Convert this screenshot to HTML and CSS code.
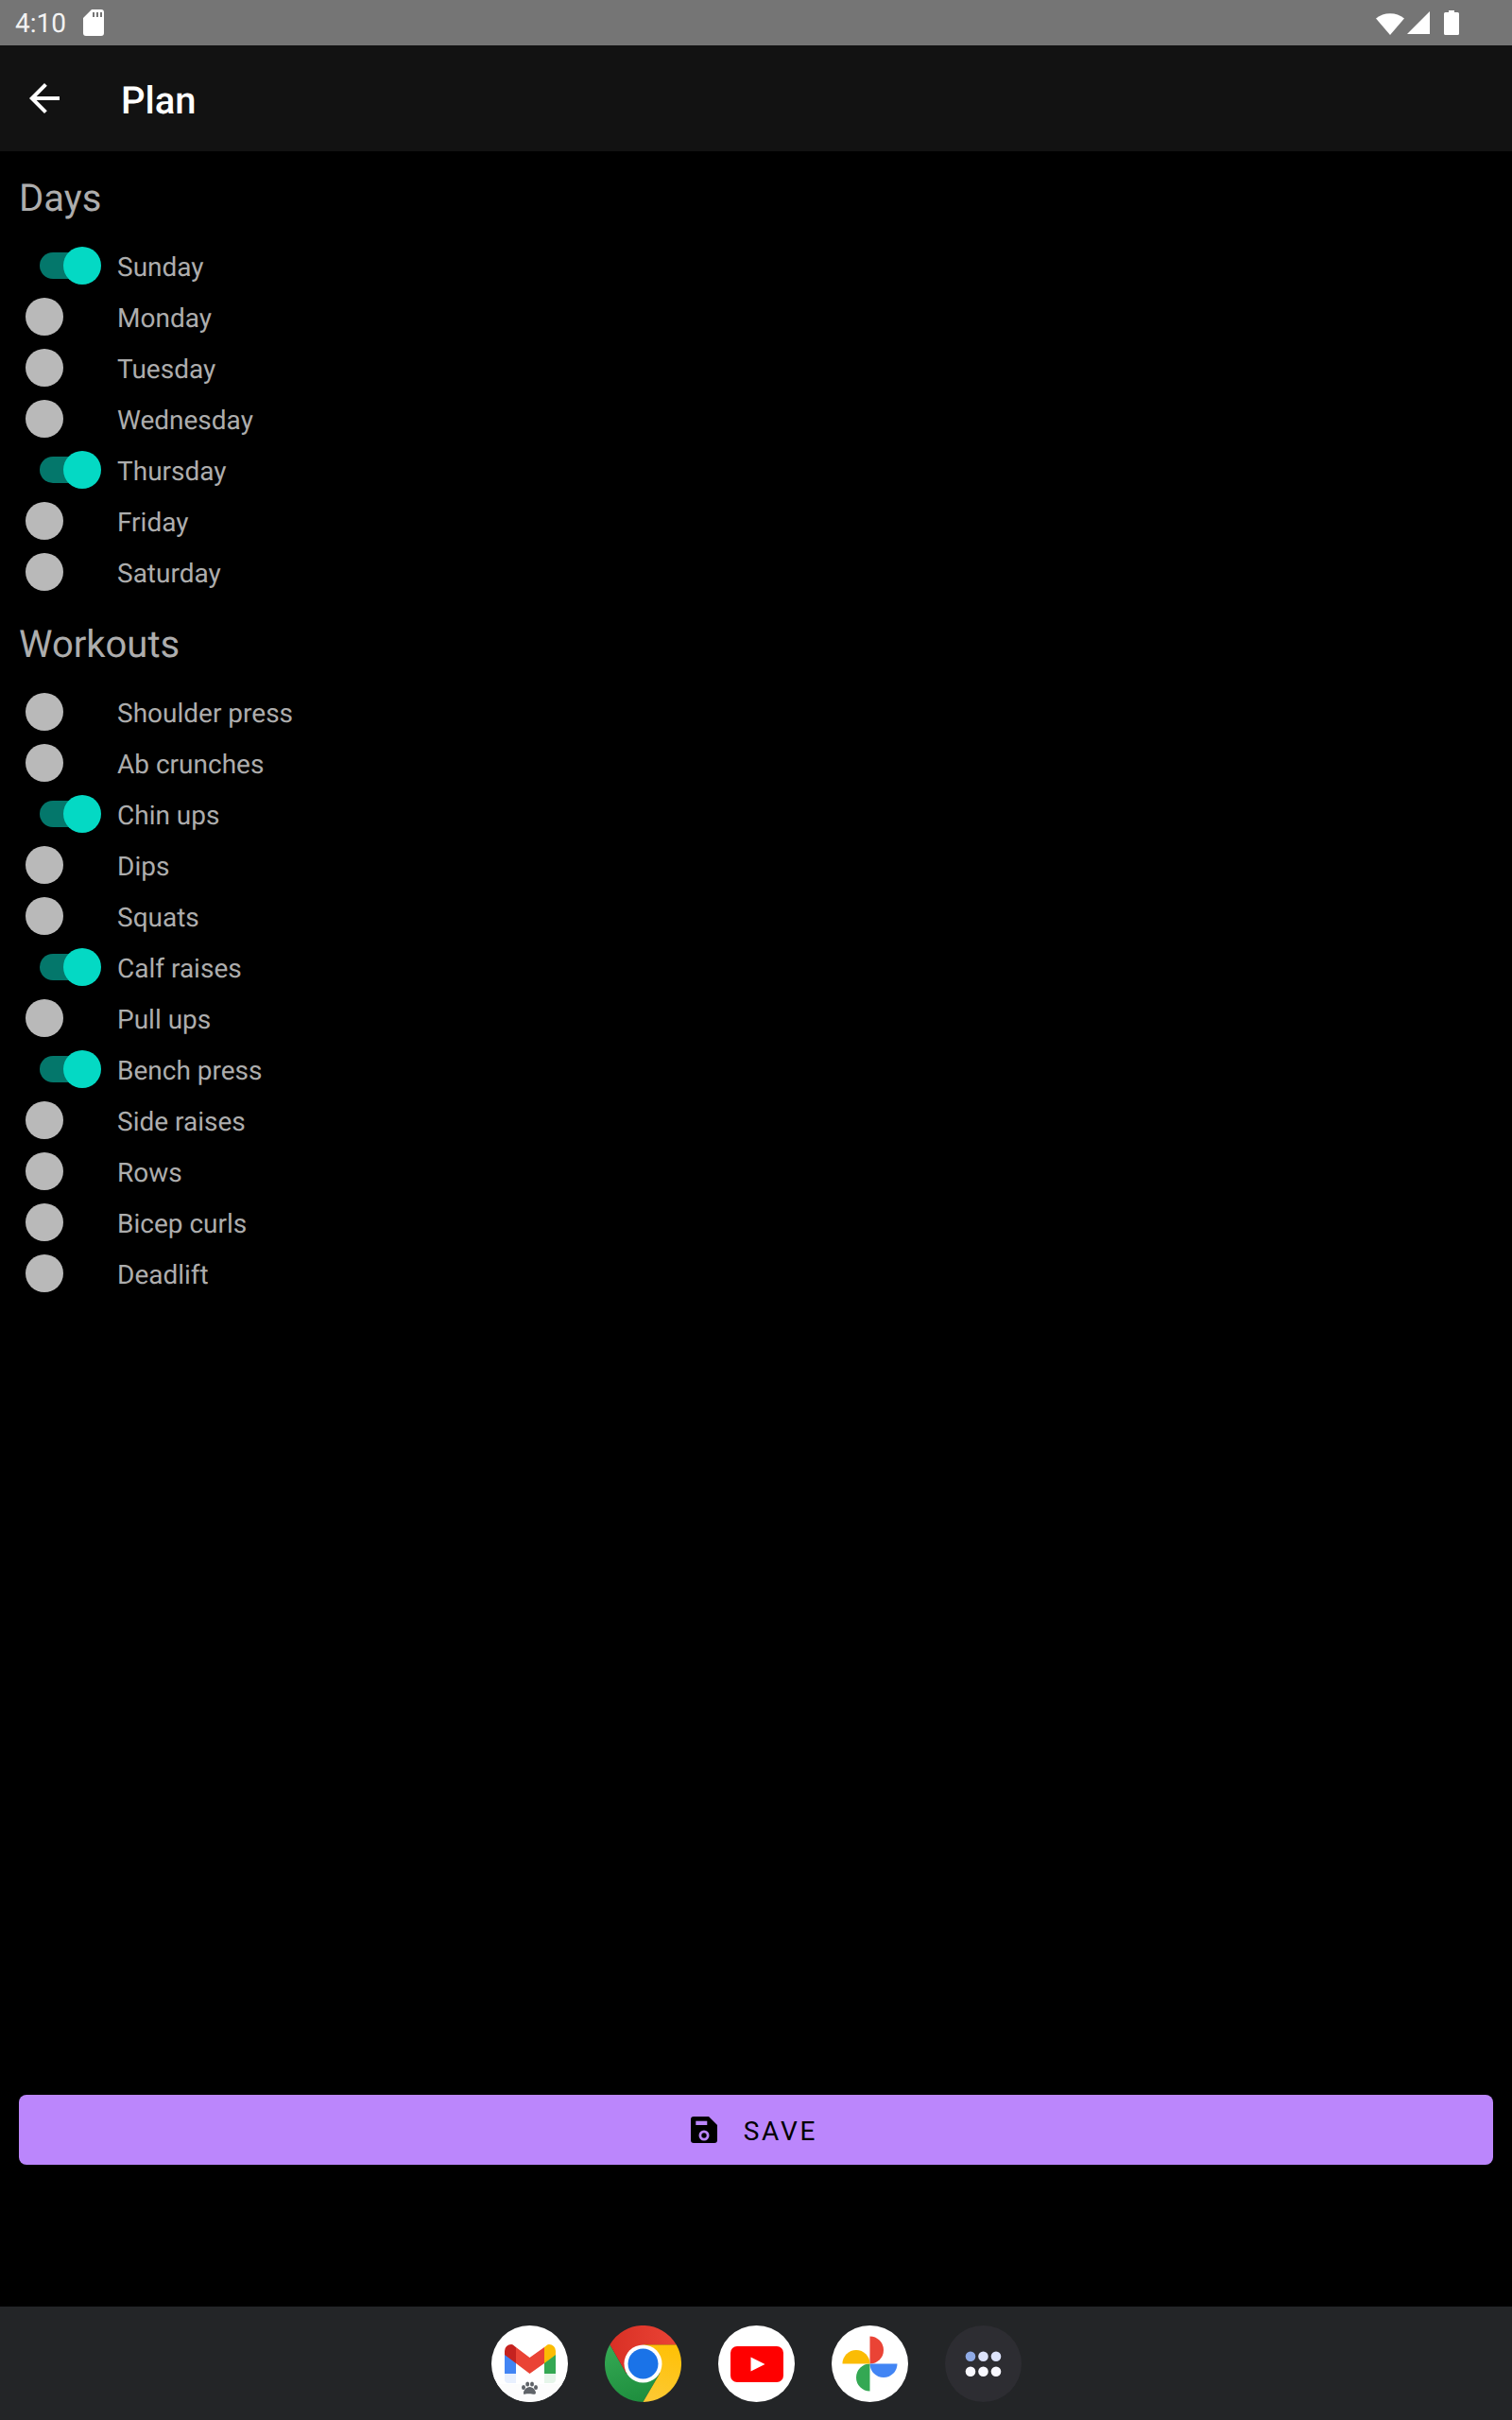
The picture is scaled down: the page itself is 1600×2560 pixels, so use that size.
FILE: index.html
```html
<!DOCTYPE html>
<html lang="en">
<head>
<meta charset="utf-8">
<title>Plan</title>
<link rel="stylesheet" href="styles.css">
</head>
<body>
<div class="screen">
  <header class="status">
    <div class="status-left">
      <span class="time">4:10</span>
      <svg class="sd" viewBox="0 0 22 28"><path fill-rule="evenodd" d="M9 0H19a3 3 0 0 1 3 3V25a3 3 0 0 1-3 3H3a3 3 0 0 1-3-3V9zM10 3V8H12V3zM14 3V8H16V3zM18 3V8H20V3z"/></svg>
    </div>
    <div class="status-right">
      <svg class="wifi" viewBox="0 0 30 25"><path d="M0 7.500A24 24 0 0 1 30 7.500L15 25z"/></svg>
      <svg class="signal" viewBox="0 0 24 24"><path d="M24 0V24H0z"/></svg>
      <svg class="battery" viewBox="0 0 16 26"><path d="M5 0H11V2H14.500A1.500 1.500 0 0 1 16 3.500V24.500A1.500 1.500 0 0 1 14.500 26H1.500A1.500 1.500 0 0 1 0 24.500V3.500A1.500 1.500 0 0 1 1.500 2H5z"/></svg>
    </div>
  </header>

  <div class="appbar">
    <svg class="back" viewBox="0 0 24 24"><path d="M20 11H7.830l5.590-5.590L12 4l-8 8 8 8 1.410-1.410L7.830 13H20v-2z"/></svg>
    <h1 class="title">Plan</h1>
  </div>

  <main class="content">
    <section class="group">
      <h2 class="heading">Days</h2>
      <div class="row"><span class="switch on"><i class="knob"></i></span><span class="label">Sunday</span></div>
      <div class="row"><span class="switch"><i class="knob"></i></span><span class="label">Monday</span></div>
      <div class="row"><span class="switch"><i class="knob"></i></span><span class="label">Tuesday</span></div>
      <div class="row"><span class="switch"><i class="knob"></i></span><span class="label">Wednesday</span></div>
      <div class="row"><span class="switch on"><i class="knob"></i></span><span class="label">Thursday</span></div>
      <div class="row"><span class="switch"><i class="knob"></i></span><span class="label">Friday</span></div>
      <div class="row"><span class="switch"><i class="knob"></i></span><span class="label">Saturday</span></div>
    </section>
    <section class="group">
      <h2 class="heading">Workouts</h2>
      <div class="row"><span class="switch"><i class="knob"></i></span><span class="label">Shoulder press</span></div>
      <div class="row"><span class="switch"><i class="knob"></i></span><span class="label">Ab crunches</span></div>
      <div class="row"><span class="switch on"><i class="knob"></i></span><span class="label">Chin ups</span></div>
      <div class="row"><span class="switch"><i class="knob"></i></span><span class="label">Dips</span></div>
      <div class="row"><span class="switch"><i class="knob"></i></span><span class="label">Squats</span></div>
      <div class="row"><span class="switch on"><i class="knob"></i></span><span class="label">Calf raises</span></div>
      <div class="row"><span class="switch"><i class="knob"></i></span><span class="label">Pull ups</span></div>
      <div class="row"><span class="switch on"><i class="knob"></i></span><span class="label">Bench press</span></div>
      <div class="row"><span class="switch"><i class="knob"></i></span><span class="label">Side raises</span></div>
      <div class="row"><span class="switch"><i class="knob"></i></span><span class="label">Rows</span></div>
      <div class="row"><span class="switch"><i class="knob"></i></span><span class="label">Bicep curls</span></div>
      <div class="row"><span class="switch"><i class="knob"></i></span><span class="label">Deadlift</span></div>
    </section>
    <button class="save" type="button">
      <svg class="save-icon" viewBox="0 0 28 28">
        <path d="M3 0H19L28 9V25a3 3 0 0 1-3 3H3a3 3 0 0 1-3-3V3a3 3 0 0 1 3-3z"/>
        <rect class="cut" x="5.300" y="4.700" width="12" height="4.300"/>
        <circle class="cut" cx="14" cy="20" r="5.500"/>
        <circle cx="14" cy="20" r="2.700"/>
      </svg>
      <span class="save-text">SAVE</span>
    </button>
  </main>

  <nav class="dock">
    <svg class="app" viewBox="0 0 81 81">
      <defs><clipPath id="disc"><circle cx="40.500" cy="40.500" r="40.500"/></clipPath></defs>
      <circle cx="40.500" cy="40.500" r="40.500" fill="#fff"/>
      <path fill="#4285f4" d="M14 28H26V61H18a4 4 0 0 1-4-4z"/>
      <path fill="#34a853" d="M56 28H68V57a4 4 0 0 1-4 4H56z"/>
      <path fill="#ea4335" d="M26 23 40.500 34 56 23V40L40.500 51 26 40z"/>
      <path fill="#c5221f" d="M14 27A7 7 0 0 1 21 20C23 20 24 21.500 26 23V40L14 31z"/>
      <path fill="#fbbc04" d="M56 23C58 21.500 59 20 61 20A7 7 0 0 1 68 27V31L56 40z"/>
      <g clip-path="url(#disc)">
        <path fill="#fff" fill-opacity="0.880" d="M0 51H81V62H0z"/>
        <path fill="#fcfcfc" d="M0 62H81V81H0z"/>
      </g>
      <g fill="#5f6368">
        <ellipse cx="34" cy="65.500" rx="2" ry="2.500"/>
        <ellipse cx="38.200" cy="62" rx="2" ry="2.500"/>
        <ellipse cx="43" cy="62" rx="2" ry="2.500"/>
        <ellipse cx="47" cy="65.500" rx="2" ry="2.500"/>
        <path d="M40.500 65C44 65 47 69 47 71S45 73 43 72.500 38 72 36 72.500 34 73 34 71 37 65 40.500 65z"/>
      </g>
    </svg>
    <svg class="app" viewBox="0 0 81 81">
      <defs>
        <linearGradient id="cr" x1="0" y1="0.300" x2="1" y2="0.300"><stop offset="0" stop-color="#d93025"/><stop offset="1" stop-color="#ea4335"/></linearGradient>
        <linearGradient id="cg" x1="0.300" y1="0" x2="0.600" y2="1"><stop offset="0" stop-color="#34a853"/><stop offset="1" stop-color="#1e8e3e"/></linearGradient>
        <linearGradient id="cy" x1="0.500" y1="0" x2="0.300" y2="1"><stop offset="0" stop-color="#ffc107"/><stop offset="1" stop-color="#fcc934"/></linearGradient>
      </defs>
      <path fill="url(#cg)" d="M5.400 20.250A40.500 40.500 0 0 0 40.500 81L58.200 50.750H22.800z"/>
      <path fill="url(#cy)" d="M75.600 20.250A40.500 40.500 0 0 1 40.500 81L58.200 50.750 40.500 20.250z"/>
      <path fill="url(#cr)" d="M5.400 20.250A40.500 40.500 0 0 1 75.600 20.250H40.500L22.800 50.750z"/>
      <circle cx="40.500" cy="40.500" r="20" fill="#fff"/>
      <circle cx="40.500" cy="40.500" r="16" fill="#1a73e8"/>
    </svg>
    <svg class="app" viewBox="0 0 81 81">
      <circle cx="40.500" cy="40.500" r="40.500" fill="#fff"/>
      <rect x="13" y="22" width="56" height="38" rx="7" fill="#f00"/>
      <path fill="#fff" d="M34.500 33.500 49.500 41 34.500 48.500z"/>
    </svg>
    <svg class="app" viewBox="0 0 81 81">
      <circle cx="40.500" cy="40.500" r="40.500" fill="#fff"/>
      <path fill="#ea4335" d="M40.500 11.500A14.500 14.500 0 0 1 40.500 40.500z"/>
      <path fill="#4285f4" d="M69.500 40.500A14.500 14.500 0 0 1 40.500 40.500z"/>
      <path fill="#34a853" d="M40.500 69.500A14.500 14.500 0 0 1 40.500 40.500z"/>
      <path fill="#fbbc04" d="M11.500 40.500A14.500 14.500 0 0 1 40.500 40.500z"/>
    </svg>
    <svg class="app" viewBox="0 0 81 81">
      <circle cx="40.500" cy="40.500" r="40.500" fill="#2d2d32"/>
      <circle cx="27" cy="32.700" r="5.300" fill="#8faae6"/>
      <circle cx="40.500" cy="32.700" r="5.300" fill="#dde3fb"/>
      <circle cx="54" cy="32.700" r="5.300" fill="#dde3fb"/>
      <circle cx="27" cy="48.700" r="5.300" fill="#f8f8ff"/>
      <circle cx="40.500" cy="48.700" r="5.300" fill="#f8f8ff"/>
      <circle cx="54" cy="48.700" r="5.300" fill="#f8f8ff"/>
    </svg>
  </nav>
</div>
</body>
</html>
```

FILE: styles.css
```css
* { box-sizing: border-box; }
html, body { margin: 0; padding: 0; background: #000; }
.screen {
  width: 1600px;
  height: 2560px;
  display: flex;
  flex-direction: column;
  font-family: Roboto, "Liberation Sans", sans-serif;
  text-rendering: geometricPrecision;
  overflow: hidden;
}
.status {
  height: 48px;
  background: #757575;
  display: flex;
  justify-content: space-between;
  align-items: center;
  padding: 0 56px 0 16px;
  flex: none;
}
.status-left { display: flex; align-items: center; gap: 18px; }
.time { color: #f2f2f2; font-size: 28px; line-height: 48px; padding-top: 2px; }
.sd { width: 22px; height: 28px; fill: #fff; }
.status-right { display: flex; align-items: center; }
.status-right svg { fill: #fff; display: block; }
.wifi { width: 30px; height: 25px; margin-right: 3px; }
.signal { width: 24px; height: 24px; margin-right: 15px; }
.battery { width: 16px; height: 26px; }
.appbar {
  height: 112px;
  flex: none;
  background: #121212;
  display: flex;
  align-items: center;
  padding-left: 23px;
}
.back { width: 48px; height: 48px; fill: #fff; margin-right: 57px; }
.title {
  margin: 0;
  color: #fff;
  font-size: 40px;
  font-weight: 500;
  line-height: 48px;
  padding-top: 6px;
}
.content {
  flex: 1;
  display: flex;
  flex-direction: column;
  padding: 0 20px;
}
.heading {
  margin: 0;
  height: 94px;
  color: #adadad;
  font-size: 40px;
  font-weight: 400;
  line-height: 100px;
}
.row {
  height: 54px;
  display: flex;
  align-items: center;
  padding-left: 7px;
  gap: 17px;
}
.label { color: #adadad; font-size: 28px; line-height: 54px; padding-top: 4px; }
.switch {
  position: relative;
  width: 80px;
  height: 40px;
  display: flex;
  flex: none;
}
.knob {
  position: relative;
  width: 40px;
  height: 40px;
  border-radius: 50%;
  background: #b9b9b9;
}
.switch.on { justify-content: flex-end; }
.switch.on::before {
  content: "";
  position: absolute;
  left: 15px;
  top: 6px;
  width: 56px;
  height: 28px;
  border-radius: 14px;
  background: #04776b;
}
.switch.on .knob { background: #04d9c4; }
.save {
  margin: auto 0 150px;
  padding: 0 4px 0 0;
  height: 74px;
  flex: none;
  border: 0;
  border-radius: 8px;
  background: #bb86fc;
  color: #000;
  font-family: inherit;
  font-size: 28px;
  font-weight: 400;
  letter-spacing: 2.800px;
  display: flex;
  align-items: center;
  justify-content: center;
  gap: 28px;
}
.save-text { padding-top: 2px; }
.save-icon { width: 28px; height: 28px; fill: #000; }
.save-icon .cut { fill: #bb86fc; }
.dock {
  height: 120px;
  flex: none;
  background: #232527;
  display: flex;
  align-items: center;
  justify-content: center;
  gap: 39px;
}
.app { width: 81px; height: 81px; display: block; }
```
